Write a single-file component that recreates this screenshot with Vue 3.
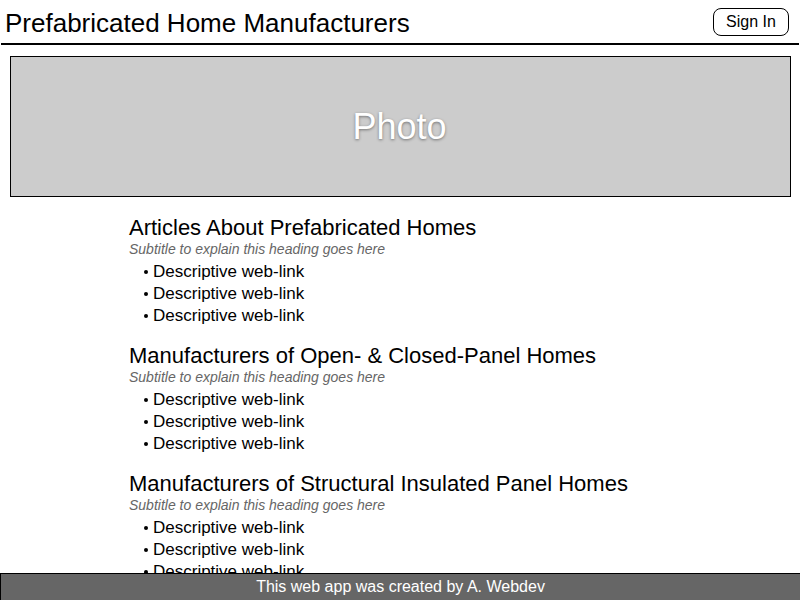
<script setup>
const sections = [
  { title: 'Articles About Prefabricated Homes' },
  { title: 'Manufacturers of Open- & Closed-Panel Homes' },
  { title: 'Manufacturers of Structural Insulated Panel Homes' }
]
const links = ['Descriptive web-link', 'Descriptive web-link', 'Descriptive web-link']
</script>

<template>
  <div class="page">
    <header class="top">
      <h1>Prefabricated Home Manufacturers</h1>
      <button type="button" class="sign-in">Sign In</button>
    </header>
    <div class="photo">Photo</div>
    <main class="content">
      <section v-for="section in sections" :key="section.title" class="group">
        <h2>{{ section.title }}</h2>
        <p>Subtitle to explain this heading goes here</p>
        <ul>
          <li v-for="(link, i) in links" :key="i"><a href="#">{{ link }}</a></li>
        </ul>
      </section>
    </main>
    <footer class="bottom">This web app was created by A. Webdev</footer>
  </div>
</template>

<style>
body {
  margin: 0;
  background: #fff;
}
</style>

<style scoped>
.page {
  display: flex;
  flex-direction: column;
  height: 100vh;
  overflow: hidden;
  font-family: "Liberation Sans", Arial, sans-serif;
  font-size: 16px;
  color: #000;
}
.top {
  display: flex;
  flex: none;
  align-items: center;
  justify-content: space-between;
  box-sizing: border-box;
  height: 45px;
  margin: 0 1px;
  padding: 0 10px 0 4px;
  border-bottom: 2px solid #000;
}
h1,
h2,
p,
ul {
  margin: 0;
  padding: 0;
  font-weight: 400;
}
h1 {
  padding-top: 2px;
  font-size: 26px;
  line-height: 30px;
}
.sign-in {
  box-sizing: border-box;
  width: 76px;
  height: 28px;
  padding: 0;
  border: 1px solid #000;
  border-radius: 8px;
  background: #fff;
  color: #000;
  font: inherit;
}
.photo {
  display: flex;
  flex: none;
  align-items: center;
  justify-content: center;
  box-sizing: border-box;
  height: 141px;
  margin: 11px 9px 0 10px;
  padding-right: 2px;
  border: 1px solid #000;
  background: #ccc;
  color: #fff;
  font-size: 36px;
  text-shadow: 0 1px 3px rgba(0, 0, 0, 0.45);
}
.content {
  flex: 1;
  min-height: 0;
  overflow: hidden;
  padding: 18px 16% 0 calc(16% + 1px);
}
.group {
  margin-bottom: 16px;
}
h2 {
  font-size: 22px;
  line-height: 25px;
}
p {
  color: #666;
  font-size: 14px;
  font-style: italic;
  line-height: 19px;
}
ul {
  padding-top: 2px;
  list-style: none;
}
li {
  display: flex;
  align-items: center;
  gap: 5px;
  padding-left: 15px;
  font-size: 17px;
  line-height: 22px;
}
li::before {
  content: "";
  width: 4px;
  height: 4px;
  border-radius: 50%;
  background: #000;
}
a {
  color: #000;
  text-decoration: none;
}
.bottom {
  flex: none;
  box-sizing: border-box;
  height: 27px;
  border-top: 1px solid #000;
  border-left: 1px solid #000;
  background: #666;
  color: #fff;
  line-height: 26px;
  text-align: center;
}
</style>
